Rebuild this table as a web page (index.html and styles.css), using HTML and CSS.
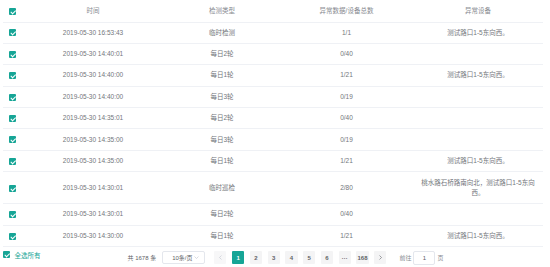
FILE: index.html
```html
<!DOCTYPE html>
<html lang="zh-CN">
<head>
    <meta charset="UTF-8">
    <title>异常记录</title>
    <link rel="stylesheet" href="styles.css">
</head>
<body>
    <div class="wrap">
        <table class="record-table">
            <colgroup>
                <col class="col-check">
                <col class="col-time">
                <col class="col-type">
                <col class="col-count">
                <col class="col-device">
            </colgroup>
            <thead>
                <tr>
                    <th><span class="checkbox"></span></th>
                    <th>时间</th>
                    <th>检测类型</th>
                    <th>异常数据/设备总数</th>
                    <th>异常设备</th>
                </tr>
            </thead>
            <tbody>
                <tr>
                    <td><span class="checkbox"></span></td>
                    <td>2019-05-30 16:53:43</td>
                    <td>临时检测</td>
                    <td>1/1</td>
                    <td>测试路口1-5东向西。</td>
                </tr>
                <tr>
                    <td><span class="checkbox"></span></td>
                    <td>2019-05-30 14:40:01</td>
                    <td>每日2轮</td>
                    <td>0/40</td>
                    <td></td>
                </tr>
                <tr>
                    <td><span class="checkbox"></span></td>
                    <td>2019-05-30 14:40:00</td>
                    <td>每日1轮</td>
                    <td>1/21</td>
                    <td>测试路口1-5东向西。</td>
                </tr>
                <tr>
                    <td><span class="checkbox"></span></td>
                    <td>2019-05-30 14:40:00</td>
                    <td>每日3轮</td>
                    <td>0/19</td>
                    <td></td>
                </tr>
                <tr>
                    <td><span class="checkbox"></span></td>
                    <td>2019-05-30 14:35:01</td>
                    <td>每日2轮</td>
                    <td>0/40</td>
                    <td></td>
                </tr>
                <tr>
                    <td><span class="checkbox"></span></td>
                    <td>2019-05-30 14:35:00</td>
                    <td>每日3轮</td>
                    <td>0/19</td>
                    <td></td>
                </tr>
                <tr>
                    <td><span class="checkbox"></span></td>
                    <td>2019-05-30 14:35:00</td>
                    <td>每日1轮</td>
                    <td>1/21</td>
                    <td>测试路口1-5东向西。</td>
                </tr>
                <tr class="tall">
                    <td><span class="checkbox"></span></td>
                    <td>2019-05-30 14:30:01</td>
                    <td>临时巡检</td>
                    <td>2/80</td>
                    <td>桃水路石桥路南向北，测试路口1-5东向西。</td>
                </tr>
                <tr>
                    <td><span class="checkbox"></span></td>
                    <td>2019-05-30 14:30:01</td>
                    <td>每日2轮</td>
                    <td>0/40</td>
                    <td></td>
                </tr>
                <tr>
                    <td><span class="checkbox"></span></td>
                    <td>2019-05-30 14:30:00</td>
                    <td>每日1轮</td>
                    <td>1/21</td>
                    <td>测试路口1-5东向西。</td>
                </tr>
            </tbody>
        </table>

        <div class="footer">
            <label class="select-all">
                <span class="checkbox"></span>
                <span>全选所有</span>
            </label>

            <div class="pager">
                <span class="total">共 1678 条</span>
                <div class="size-select">
                    <span>10条/页</span>
                    <svg class="caret" viewBox="0 0 10 6" width="5" height="3">
                        <path d="M1 1 L5 5 L9 1" fill="none" stroke="#c0c4cc" stroke-width="1.2"/>
                    </svg>
                </div>
                <ul class="pages">
                    <li class="btn disabled">
                        <svg viewBox="0 0 6 10" width="3" height="5"><path d="M5 1 L1 5 L5 9" fill="none" stroke="#c0c4cc" stroke-width="1.2"/></svg>
                    </li>
                    <li class="btn active">1</li>
                    <li class="btn">2</li>
                    <li class="btn">3</li>
                    <li class="btn">4</li>
                    <li class="btn">5</li>
                    <li class="btn">6</li>
                    <li class="btn">···</li>
                    <li class="btn">168</li>
                    <li class="btn">
                        <svg viewBox="0 0 6 10" width="3" height="5"><path d="M1 1 L5 5 L1 9" fill="none" stroke="#606266" stroke-width="1.2"/></svg>
                    </li>
                </ul>
                <div class="jump">
                    <span>前往</span>
                    <span class="jump-input">1</span>
                    <span>页</span>
                </div>
            </div>
        </div>
    </div>
</body>
</html>
```

FILE: styles.css
```css
* {
    margin: 0;
    padding: 0;
    box-sizing: border-box;
}

body {
    font-family: "Liberation Sans", "Noto Sans CJK SC", sans-serif;
    background: #fff;
    color: #606266;
}

.wrap {
    width: 540px;
    margin-left: 3px;
}

.record-table {
    width: 540px;
    table-layout: fixed;
    border-collapse: collapse;
    font-size: 6.5px;
}

.col-check { width: 19px; }
.col-time { width: 142px; }
.col-type { width: 116px; }
.col-count { width: 133px; }
.col-device { width: 130px; }

.record-table th,
.record-table td {
    text-align: center;
    vertical-align: middle;
    border-bottom: 1px solid #eff1f5;
    padding: 0 9px;
    line-height: 10px;
}

.record-table th:first-child,
.record-table td:first-child {
    padding: 0;
}

.record-table th:last-child,
.record-table td:last-child {
    padding: 0 7px;
}

.record-table th {
    height: 22px;
    font-weight: normal;
    color: #888b91;
}

.record-table td {
    height: 21.4px;
    color: #73767b;
}

.record-table tr.tall td {
    height: 32px;
}

.checkbox {
    display: inline-block;
    position: relative;
    width: 7px;
    height: 7px;
    border-radius: 1px;
    background: #16a596;
    vertical-align: middle;
}

.checkbox::after {
    content: "";
    position: absolute;
    left: 2.5px;
    top: 1px;
    width: 1.5px;
    height: 3.5px;
    border: solid #fff;
    border-width: 0 1px 1px 0;
    transform: rotate(45deg);
}

.footer {
    display: flex;
    align-items: center;
    height: 21px;
}

.select-all {
    display: flex;
    align-items: center;
    gap: 5px;
    font-size: 6.5px;
    color: #16a596;
    margin-top: -6px;
}

.select-all .checkbox {
    width: 6.5px;
    height: 6.5px;
}

.pager {
    display: flex;
    align-items: center;
    margin-left: 87px;
    font-size: 6px;
    color: #606266;
}

.total {
    margin-right: 6px;
}

.size-select {
    display: flex;
    align-items: center;
    justify-content: space-between;
    width: 43px;
    height: 13px;
    padding: 0 5px 0 9px;
    border: 1px solid #e4e7ed;
    border-radius: 2px;
    margin-right: 9px;
}

.pages {
    display: flex;
    list-style: none;
    gap: 5.6px;
}

.btn {
    display: flex;
    align-items: center;
    justify-content: center;
    min-width: 12.2px;
    height: 13px;
    padding: 0 1px;
    background: #f4f4f5;
    border-radius: 1px;
    font-weight: bold;
    color: #606266;
}

.btn.active {
    background: #16a596;
    color: #fff;
}

.btn.disabled {
    background: #f7f7f8;
}

.jump {
    display: flex;
    align-items: center;
    gap: 2px;
    margin-left: 13px;
    color: #8a8d93;
}

.jump-input {
    display: flex;
    align-items: center;
    justify-content: center;
    width: 22px;
    height: 14px;
    border: 1px solid #e4e7ed;
    border-radius: 2px;
    color: #606266;
}
```
